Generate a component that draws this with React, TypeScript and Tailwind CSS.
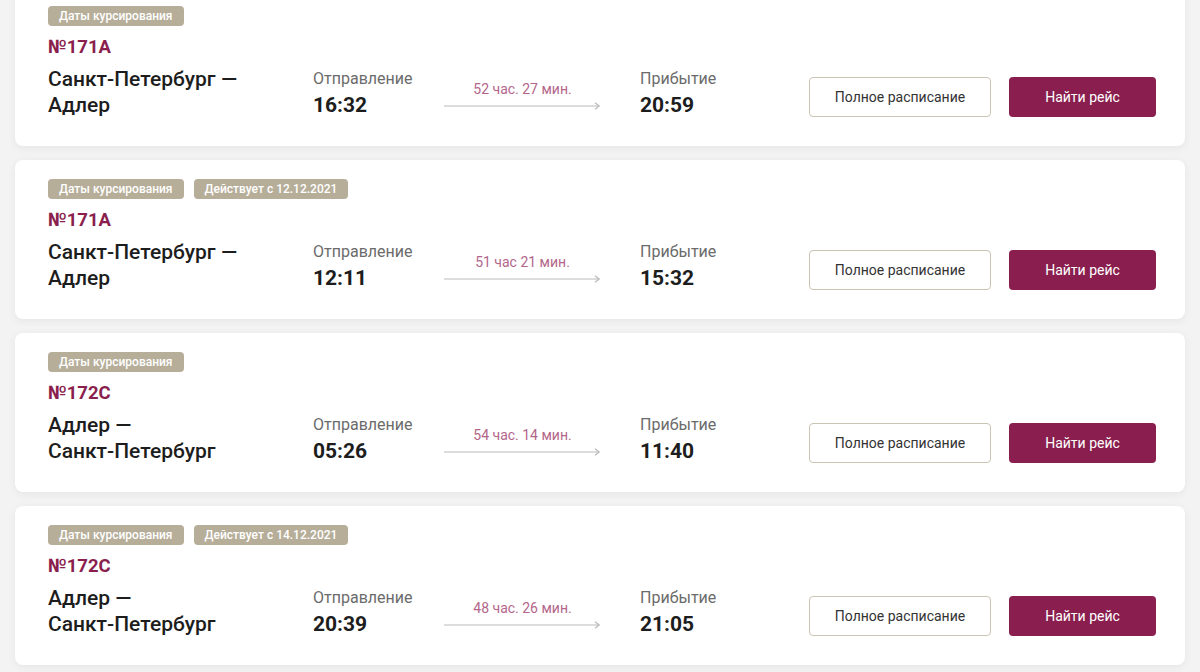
import React from 'react';

type Trip = {
  badges: string[];
  num: string;
  from: string;
  to: string;
  dep: string;
  dur: string;
  arr: string;
};

const trips: Trip[] = [
  { badges: ['Даты курсирования'], num: '№171А', from: 'Санкт-Петербург —', to: 'Адлер', dep: '16:32', dur: '52 час. 27 мин.', arr: '20:59' },
  { badges: ['Даты курсирования', 'Действует с 12.12.2021'], num: '№171А', from: 'Санкт-Петербург —', to: 'Адлер', dep: '12:11', dur: '51 час 21 мин.', arr: '15:32' },
  { badges: ['Даты курсирования'], num: '№172С', from: 'Адлер —', to: 'Санкт-Петербург', dep: '05:26', dur: '54 час. 14 мин.', arr: '11:40' },
  { badges: ['Даты курсирования', 'Действует с 14.12.2021'], num: '№172С', from: 'Адлер —', to: 'Санкт-Петербург', dep: '20:39', dur: '48 час. 26 мин.', arr: '21:05' },
];

function Arrow() {
  return (
    <svg width="157" height="8" viewBox="0 0 157 8" className="block">
      <line x1="0" y1="4" x2="155" y2="4" stroke="#b9b9b9" strokeWidth="1.2" />
      <path d="M151 0.8 L155.2 4 L151 7.2" fill="none" stroke="#b9b9b9" strokeWidth="1.2" />
    </svg>
  );
}

function TripCard({ t }: { t: Trip }) {
  return (
    <div className="bg-white rounded-lg shadow-[0_2px_8px_rgba(0,0,0,0.06)] pl-[33px] pr-[29px] pt-[19px] pb-[28px]">
      <div className="flex gap-[10px]">
        {t.badges.map((b) => (
          <span key={b} className="inline-block h-5 px-[11px] rounded-[4px] bg-[#b6ae99] text-white text-[12px] leading-5 font-medium">
            {b}
          </span>
        ))}
      </div>
      <div className="mt-[10px] text-[18.5px] leading-[22px] font-bold text-[#8a1f4e]">{t.num}</div>
      <div className="mt-[8px] flex items-start">
        <div className="w-[265px] text-[21px] leading-[26px] font-medium text-[#1d1d1d]">
          <div>{t.from}</div>
          <div>{t.to}</div>
        </div>
        <div className="w-[131px]">
          <div className="text-[16px] leading-[26px] text-[#6b6b6b]">Отправление</div>
          <div className="text-[21px] leading-[26px] font-bold text-[#1d1d1d]">{t.dep}</div>
        </div>
        <div className="w-[196px] pt-[13px]">
          <div className="w-[157px] text-center text-[14px] leading-5 text-[#b3668a]">{t.dur}</div>
          <div className="mt-[3px]">
            <Arrow />
          </div>
        </div>
        <div className="w-[100px]">
          <div className="text-[16px] leading-[26px] text-[#6b6b6b]">Прибытие</div>
          <div className="text-[21px] leading-[26px] font-bold text-[#1d1d1d]">{t.arr}</div>
        </div>
        <div className="ml-auto mt-[11px] flex gap-[18px]">
          <button className="w-[182px] h-10 rounded-[4px] border border-[#cbc4b2] bg-white text-[14px] text-[#333]">
            Полное расписание
          </button>
          <button className="w-[147px] h-10 rounded-[4px] bg-[#8a1f4f] text-[14px] font-normal text-white">
            Найти рейс
          </button>
        </div>
      </div>
    </div>
  );
}

export default function App() {
  return (
    <div className="h-[672px] overflow-hidden bg-[#f3f3f3] px-[15px]" style={{ fontFamily: 'Roboto, "Liberation Sans", sans-serif' }}>
      <div className="-mt-[13px] flex flex-col gap-[14px]">
        {trips.map((t, i) => (
          <TripCard key={i} t={t} />
        ))}
      </div>
    </div>
  );
}
